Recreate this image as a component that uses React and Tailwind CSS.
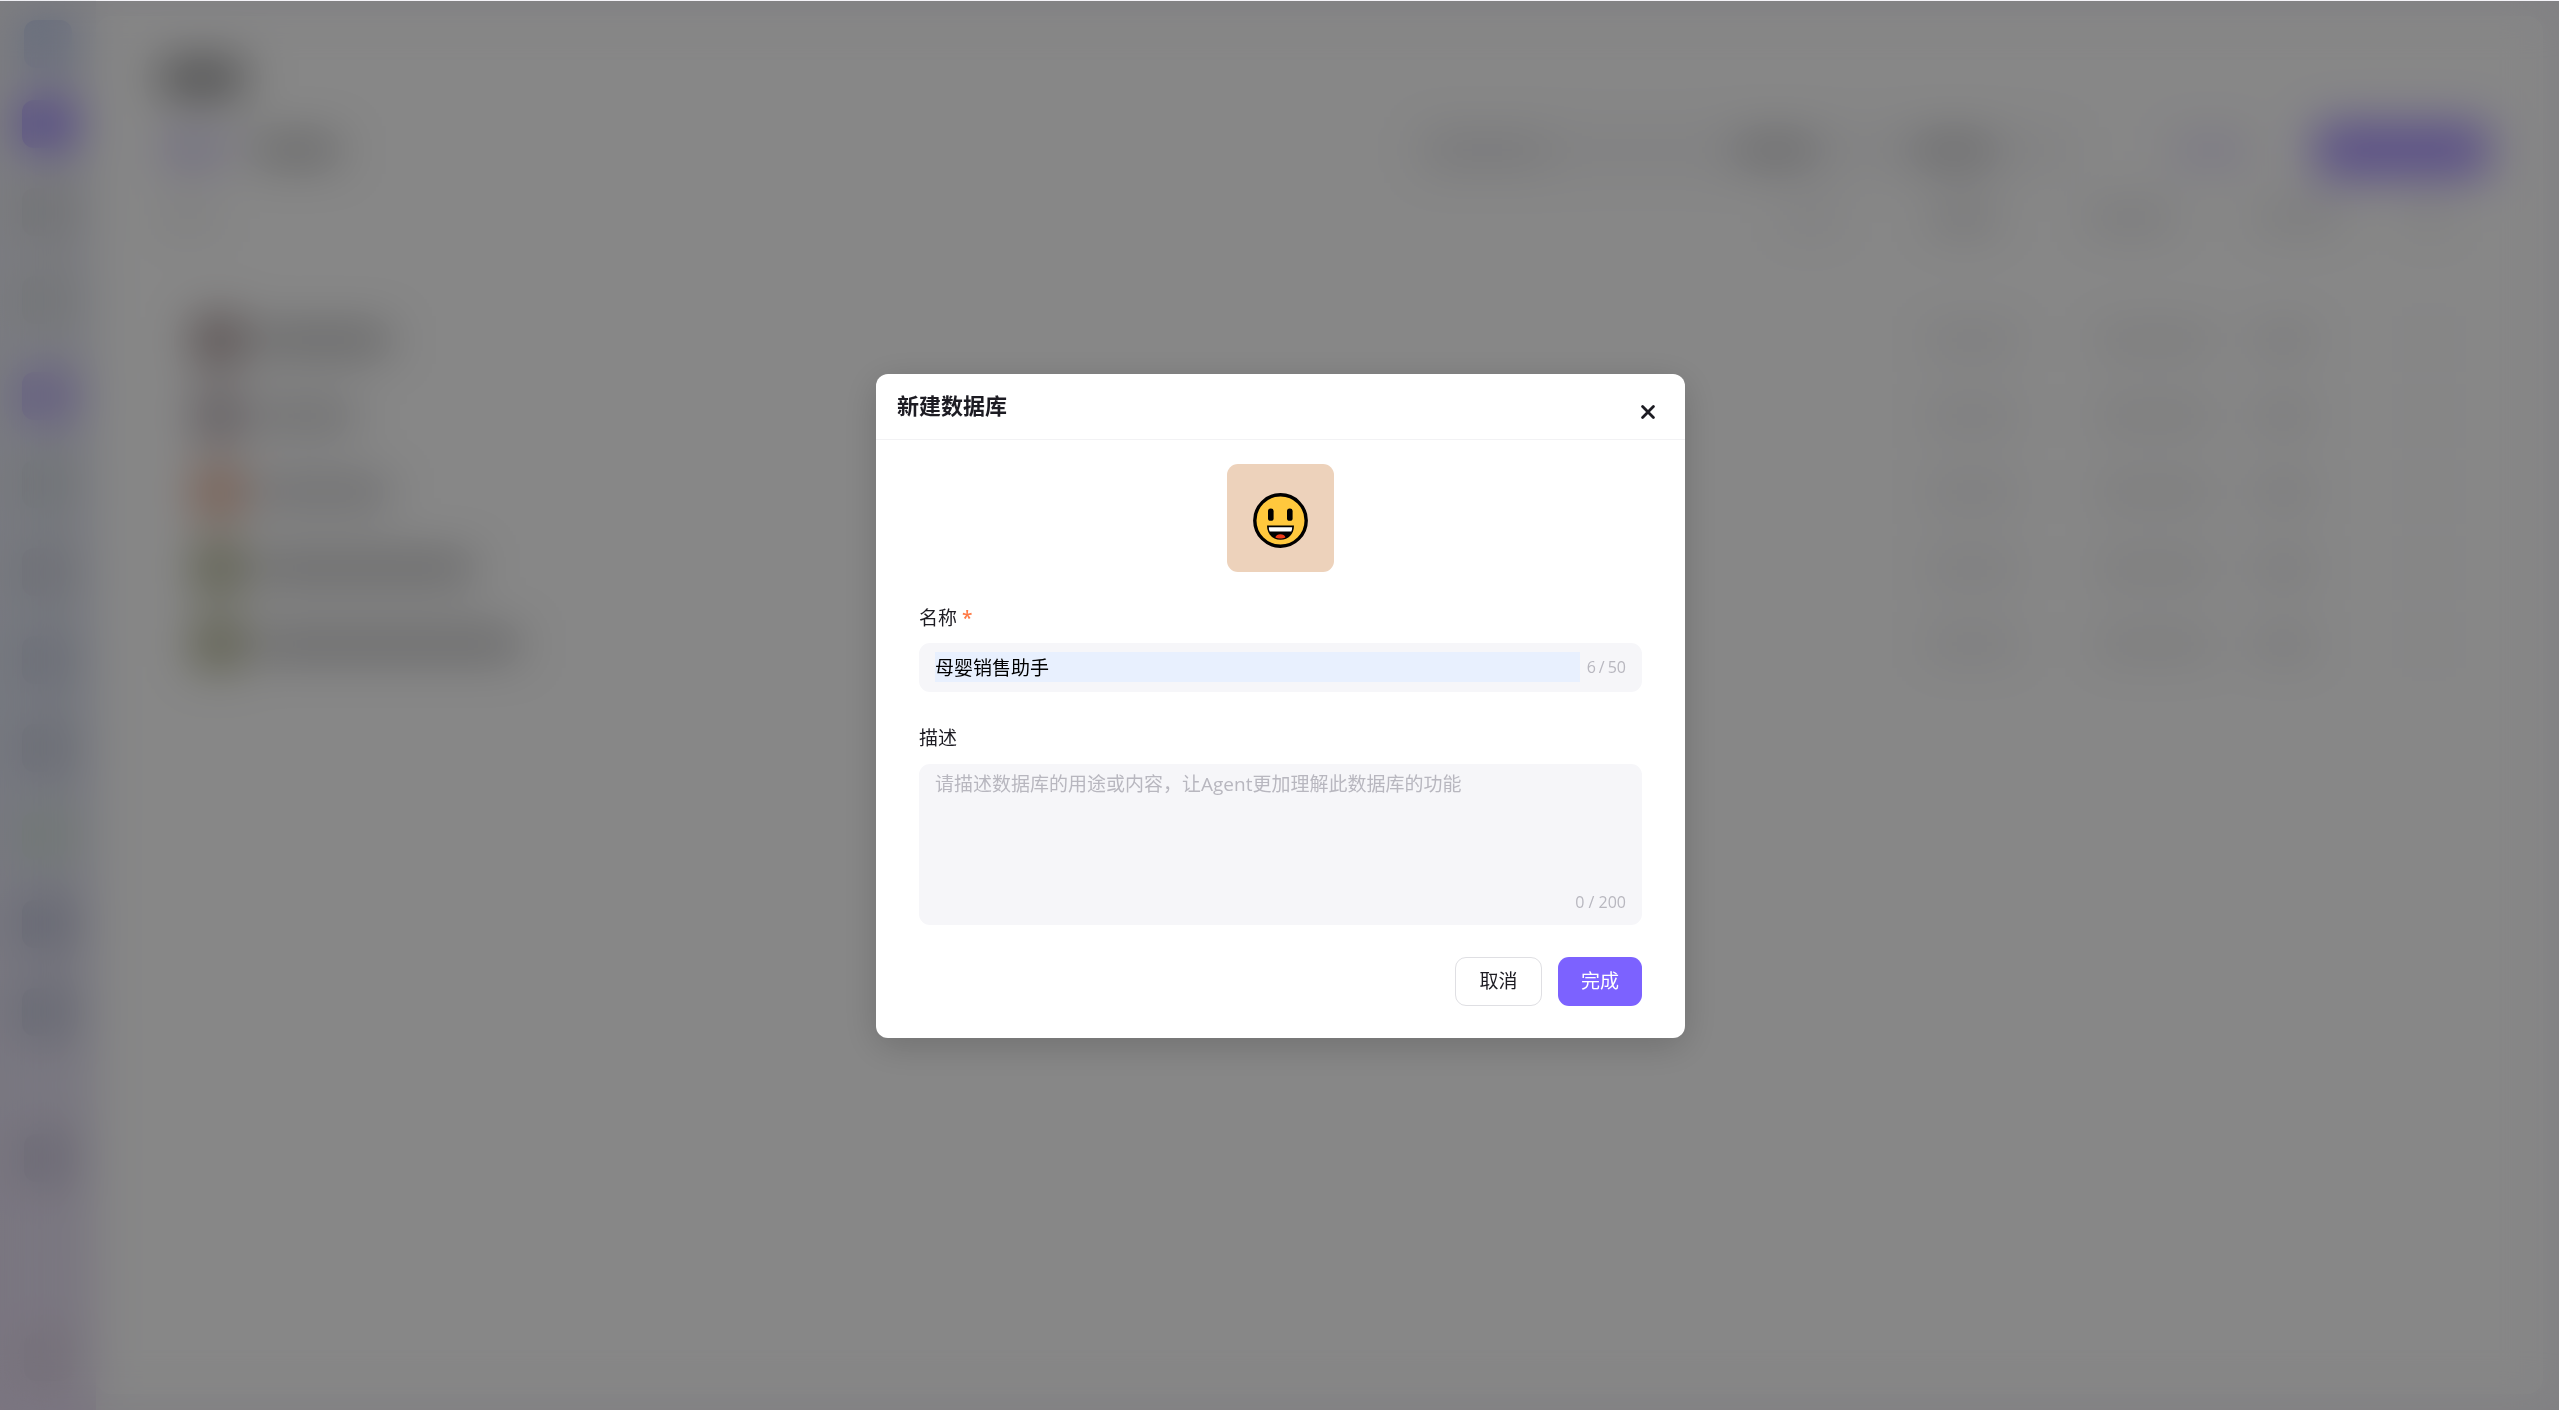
import React, { useState } from 'react'

const NAV_ITEMS = [
  'bg-[#9078ff]',
  'bg-[#d3d5da]',
  'bg-[#d6dade]',
  'bg-[#b3a3f4] mt-2',
  'bg-[#d0d6dc]',
  'bg-[#cccfda]',
  'bg-[#c6ccdc]',
  'bg-[#c4cad8]',
  'bg-[#d3e2d8]',
  'bg-[#b9bdd2]',
  'bg-[#bcc0d4]',
]

const ROWS = [
  { avatar: 'bg-[#a08e8e]', name: 'w-[134px] bg-[#acacae]' },
  { avatar: 'bg-[#b4a8ae]', name: 'w-[100px] bg-[#c0c0c3]' },
  { avatar: 'bg-[#e0a78c]', name: 'w-[134px] bg-[#bebec2]' },
  { avatar: 'bg-[#a9aa84]', name: 'w-[218px] bg-[#b0b0b2]' },
  { avatar: 'bg-[#a9aa84]', name: 'w-[264px] bg-[#b0b0b2]' },
]

const COLS = 'grid grid-cols-[1fr_160px_170px_180px_140px_120px] items-center'

const Sidebar = () => (
  <aside className="w-24 shrink-0 flex flex-col items-center gap-10 pt-5 bg-linear-to-b from-[#eeeef3] via-[#e0e4f2] to-[#e8def2]">
    <div className="w-12 h-12 -mb-2 rounded-xl bg-[#b4c2ea]"></div>
    {NAV_ITEMS.map((color, i) => (
      <div key={i} className={`w-[52px] h-12 shrink-0 rounded-xl ${color}`}></div>
    ))}
    <div className="mt-[58px] w-12 h-12 rounded-xl bg-[#c4bfd6]"></div>
    <div className="mt-[111px] w-12 h-12 rounded-xl bg-[#d8cfe0]"></div>
  </aside>
)

const DatabaseList = () => (
  <main className="flex-1 my-4 mr-4 rounded-2xl bg-white pl-16 pr-[54px] pt-[46px]">
    <div className="w-[84px] h-8 bg-[#7e7e80]"></div>
    <div className="mt-7 h-14 flex items-center">
      <div className="w-[66px] h-9 bg-[#d6cff2]"></div>
      <div className="ml-[28px] w-[86px] h-6 bg-[#b0b0b2]"></div>
      <div className="ml-auto w-[660px] h-12 rounded-lg bg-[#f5f5f7] flex items-center pl-3 gap-[190px]">
        <div className="w-[120px] h-6 bg-[#dedee2]"></div>
        <div className="flex gap-[100px]">
          <div className="w-[78px] h-6 bg-[#bcbcc0]"></div>
          <div className="w-[78px] h-6 bg-[#bcbcc0]"></div>
        </div>
      </div>
      <div className="ml-[98px] w-[76px] h-6 bg-[#e0d9f8]"></div>
      <div className="ml-[66px] w-[174px] h-[54px] rounded-lg bg-[#a892ff]"></div>
    </div>
    <div className={`${COLS} h-20 justify-items-center`}>
      <div className="w-[56px] h-6 bg-[#eaeaed] justify-self-start"></div>
      <div className="ml-6 w-[56px] h-6 bg-[#ececf0]"></div>
      <div className="w-[64px] h-6 bg-[#d6d6da]"></div>
      <div className="mr-4 w-[84px] h-6 bg-[#e0e0e4]"></div>
      <div className="w-[84px] h-6 bg-[#e2e2e6]"></div>
      <div className="w-[44px] h-6 bg-[#ececf0]"></div>
    </div>
    <div className="pt-[44px]">
      {ROWS.map((row, i) => (
        <div key={i} className={`${COLS} h-[76px] justify-items-center`}>
          <div className="justify-self-start flex items-center pl-[34px] gap-[14px]">
            <div className={`w-12 h-12 rounded-lg ${row.avatar}`}></div>
            <div className={`h-6 ${row.name}`}></div>
          </div>
          <div></div>
          <div className="ml-4 w-[90px] h-6 bg-[#e6e6ea]"></div>
          <div className="ml-8 w-[116px] h-6 bg-[#e4e4e6]"></div>
          <div className="mr-8 w-[60px] h-6 bg-[#e0e0e4]"></div>
          <div className="w-[30px] h-6 bg-[#f6f6fa]"></div>
        </div>
      ))}
    </div>
  </main>
)

const SmileIcon = () => (
  <svg width="55" height="55" viewBox="0 0 55 55" aria-hidden="true">
    <circle cx="27.5" cy="27.5" r="25.7" fill="#ffc83d" stroke="#000" strokeWidth="3.4" />
    <rect x="15" y="15.6" width="5.6" height="12.2" rx="2.6" fill="#000" />
    <rect x="34" y="15.6" width="5.6" height="12.2" rx="2.6" fill="#000" />
    <path d="M14 32.6H41C41 41 35.5 46.8 27.5 46.8C19.5 46.8 14 41 14 32.6Z" fill="#000" />
    <path d="M15.8 34.3H39.2C39.2 36 38.9 37.3 38.3 38.6H16.7C16.1 37.3 15.8 36 15.8 34.3Z" fill="#fff" />
    <path d="M22.3 44.2C23 42.4 25 41.2 27.4 41.2C29.8 41.2 31.8 42.4 32.5 44.2C31 45.2 29.3 45.6 27.4 45.6C25.5 45.6 23.8 45.2 22.3 44.2Z" fill="#f03a17" />
  </svg>
)

const CreateDatabaseModal = () => {
  const [name, setName] = useState('母婴销售助手')
  const [desc, setDesc] = useState('')

  return (
    <form
      role="dialog"
      aria-labelledby="modal-title"
      onSubmit={(e) => e.preventDefault()}
      className="w-[809px] max-w-full rounded-xl bg-white shadow-[0_8px_36px_rgba(0,0,0,0.18)] text-[19px] leading-7 text-[#1d1c23]"
    >
      <div className="h-[66px] border-b border-[#f2f2f4] pl-[21px] pr-[26px] flex items-center justify-between">
        <h2 id="modal-title" className="pb-0.5 text-[22px] leading-8 font-bold">新建数据库</h2>
        <button type="button" aria-label="关闭" className="mt-3 p-1">
          <svg width="14" height="14" viewBox="0 0 14 14" fill="none" stroke="#1d1c23" strokeWidth="2.8" strokeLinecap="round">
            <path d="M1.6 1.6 12.4 12.4M12.4 1.6 1.6 12.4" />
          </svg>
        </button>
      </div>

      <div className="px-[43px] pt-6 pb-8 flex flex-col">
        <button type="button" aria-label="更换图标" className="self-center w-[107px] h-[108px] rounded-[11px] bg-[#edd2bb] flex items-center justify-center pt-[6px]">
          <SmileIcon />
        </button>

        <label htmlFor="db-name" className="mt-8">
          名称 <span className="text-[#ff7a45] font-semibold">*</span>
        </label>
        <div className="mt-[11px] h-[49px] rounded-[11px] bg-[#f6f6f9] px-4 flex items-center gap-[7px]">
          <input
            id="db-name"
            type="text"
            maxLength={50}
            value={name}
            onChange={(e) => setName(e.target.value)}
            className="flex-1 min-w-0 h-[30px] bg-[#e8f0fe] text-black outline-none"
          />
          <span className="flex gap-[3px] text-base text-[#b8b7bf]">
            <span>{name.length} </span>
            <span>/ </span>
            <span>50</span>
          </span>
        </div>

        <label htmlFor="db-desc" className="mt-8">描述</label>
        <div className="mt-3 rounded-[11px] bg-[#f6f6f9] px-4 pt-[6px] pb-[11px] flex flex-col">
          <textarea
            id="db-desc"
            maxLength={200}
            value={desc}
            onChange={(e) => setDesc(e.target.value)}
            placeholder="请描述数据库的用途或内容，让Agent更加理解此数据库的功能"
            className="block h-[120px] resize-none bg-transparent outline-none placeholder:text-[#b8b7bf]"
          />
          <span className="self-end text-base leading-6 text-[#b8b7bf]">{desc.length} / 200</span>
        </div>

        <div className="mt-8 flex justify-end gap-4">
          <button type="button" className="h-[49px] w-[87px] rounded-[11px] border border-[#dfdfe3] bg-white">取消</button>
          <button type="submit" className="h-[49px] w-[84px] rounded-[11px] bg-[#7c62ff] text-white">完成</button>
        </div>
      </div>
    </form>
  )
}

export default function App() {
  return (
    <div className="relative min-h-screen overflow-hidden bg-white font-['Open_Sans','Noto_Sans_CJK_SC',sans-serif]">
      <div aria-hidden="true" className="flex min-h-screen bg-[#f4f3f8]">
        <Sidebar />
        <DatabaseList />
      </div>
      <div className="fixed inset-x-0 bottom-0 top-px pl-0.5 flex items-center justify-center bg-black/47 backdrop-blur-[24px]">
        <CreateDatabaseModal />
      </div>
    </div>
  )
}
